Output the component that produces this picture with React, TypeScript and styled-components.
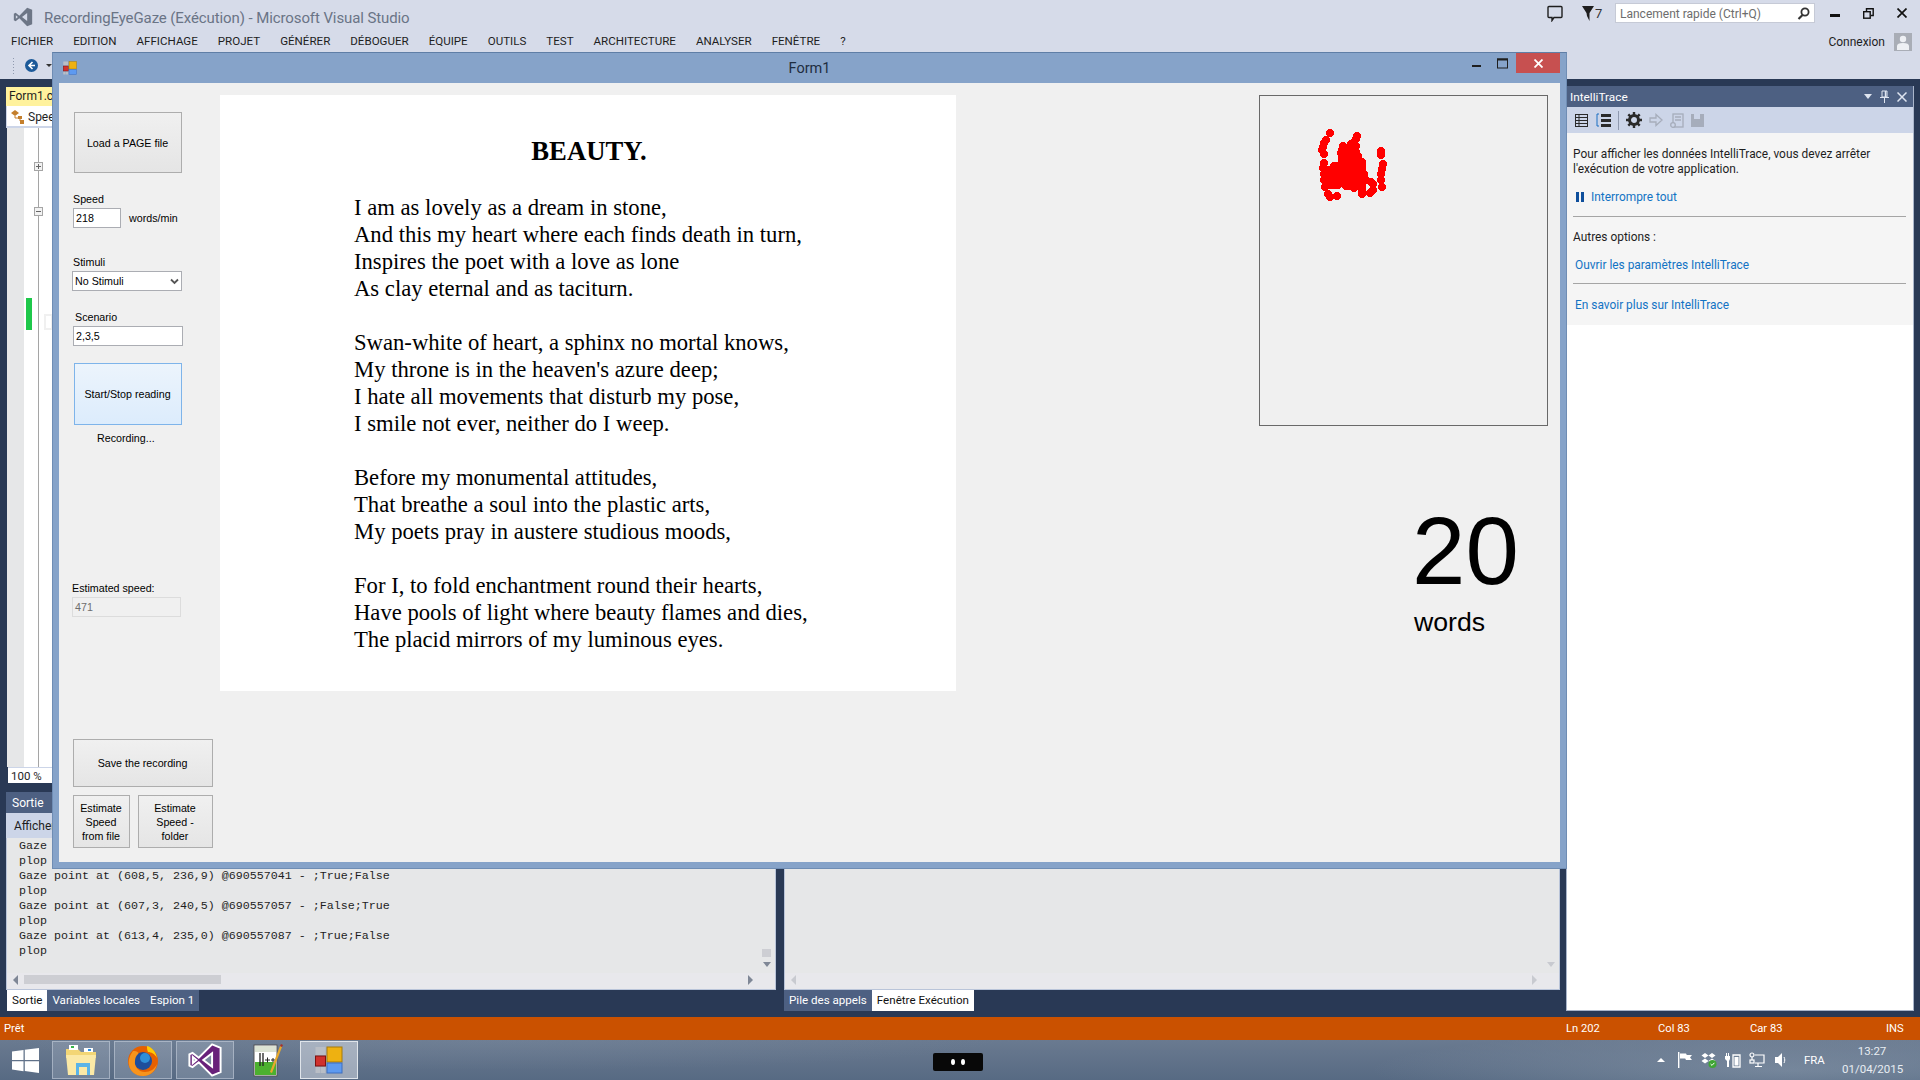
import React from "react";
import styled, { createGlobalStyle } from "styled-components";

const Global = createGlobalStyle`
  html, body { margin: 0; padding: 0; background: #293955; }
  * { box-sizing: border-box; }
`;

const ui = `"Roboto", "Liberation Sans", sans-serif`;
const win = `"Liberation Sans", Arial, sans-serif`;

const Desk = styled.div`
  position: relative; width: 1920px; height: 1080px; overflow: hidden;
  display: flex; flex-direction: column; font-family: ${ui};
`;
const VsWindow = styled.div`flex: 1; display: flex; flex-direction: column; min-height: 0;`;
const Chrome = styled.header`height: 79px; background: #d6dbe9; display: flex; flex-direction: column; flex: none;`;
const TitleRow = styled.div`height: 30px; display: flex; align-items: flex-start; padding-left: 13px;`;
const VsGlyph = styled.svg`width: 20px; height: 20px; margin-top: 7px; color: #6d7686;`;
const AppTitle = styled.div`margin: 8px 0 0 11px; font-size: 15px; line-height: 20px; color: #6a7486; letter-spacing: -0.1px;`;
const TitleRight = styled.div`margin-left: auto; display: flex; align-items: center; height: 26px; padding-right: 13px;`;
const Chat = styled.svg`width: 16px; height: 17px; color: #1e1e1e;`;
const FilterBox = styled.div`margin-left: 19px; display: flex; align-items: center; gap: 1px; font-size: 13px; color: #333; width: 33px;`;
const Quick = styled.div`
  width: 200px; height: 20px; background: #fff; border: 1px solid #c6cad6; display: flex; align-items: center;
  justify-content: space-between; padding: 1px 4px 0; font-size: 12px; color: #6d6d6d;
`;
const WinCtrl = styled.div`margin-left: 15px; display: flex; gap: 23px; align-items: center;`;
const MenuRow = styled.nav`height: 22px; display: flex; align-items: center; padding: 0 8px 0 11px; gap: 20px; font-size: 11.57px; color: #1e1e1e;`;
const Connect = styled.div`margin-left: auto; display: flex; align-items: center; gap: 9px; font-size: 12px; color: #1e1e1e; margin-top: 1px;`;
const Avatar = styled.svg`width: 18px; height: 18px;`;
const ToolRow = styled.div`height: 27px; display: flex; align-items: center; padding-left: 12px; gap: 10px;`;
const Gripper = styled.div`width: 3px; height: 17px; background-image: radial-gradient(#8f99ae 0.8px, transparent 0.9px); background-size: 3px 3px;`;
const DropCaret = styled.div`width: 0; height: 0; margin-left: -2px; border-left: 3px solid transparent; border-right: 3px solid transparent; border-top: 3px solid #333;`;

const Workspace = styled.main`flex: 1; min-height: 0; background: #293955; display: flex; padding: 7px 6px 6px 6px; gap: 6px;`;
const LeftArea = styled.div`flex: 1; min-width: 0; display: flex; flex-direction: column;`;
const Editor = styled.section`margin-top: 1px; height: 696px; display: flex; flex-direction: column; flex: none;`;
const DocTab = styled.div`width: 60px; height: 19px; background: #fff29d; font-size: 12px; line-height: 19px; padding-left: 3px; color: #1e1e1e; flex: none;`;
const NavBar = styled.div`height: 22px; background: #fff; border-left: 1px solid #ccd5e8; border-bottom: 2px solid #ccd5e8; display: flex; align-items: center; gap: 3px; padding: 1px 0 0 4px; font-size: 12px; color: #1e1e1e; flex: none;`;
const EditorBody = styled.div`flex: 1; min-height: 0; display: flex; background: #fff; margin-left: 1px;`;
const Gutter = styled.div`width: 17px; background: #e6e7e8; flex: none;`;
const ChangeCol = styled.div`width: 6px; margin-left: 2px; padding-top: 170px; flex: none;`;
const GreenBar = styled.div`height: 32px; background: #1ec84a;`;
const OutlineCol = styled.div`
  width: 9px; margin-left: 2px; flex: none; padding-top: 34px; display: flex; flex-direction: column; gap: 36px;
  background: linear-gradient(#a5a5a5, #a5a5a5) center / 1px 100% no-repeat;
`;
const Fold = styled.div`
  width: 9px; height: 9px; border: 1px solid #a5a5a5; background: #f2f2f2; display: flex; align-items: center; justify-content: center;
  &::before { content: ""; width: 5px; height: 1px; background: #666; }
  ${(p: { $plus?: boolean }) => p.$plus && `background-image: linear-gradient(#666,#666); background-size: 1px 5px; background-position: center; background-repeat: no-repeat;`}
`;
const Marker = styled.div`width: 9px; height: 16px; margin: 186px 0 0 1px; border: 2px solid #f0f0f0; flex: none;`;
const Zoom = styled.div`height: 16px; background: #fff; font-size: 11.5px; line-height: 16px; padding-left: 3px; margin-left: 2px; color: #1e1e1e; border-top: 1px solid #ccd5e8; flex: none;`;

const Bottom = styled.div`margin-top: 9px; flex: 1; min-height: 0; display: flex; gap: 8px;`;
const ToolPanel = styled.section`flex: ${(p: { $w?: number }) => (p.$w ? `0 0 ${p.$w}px` : "1")}; min-width: 0; display: flex; flex-direction: column;`;
const PanelHead = styled.div`height: 21px; background: #4d6082; color: #fff; font-size: 12px; line-height: 23px; padding-left: 6px; flex: none;`;
const PanelTools = styled.div`height: 25px; background: #ccd5e8; font-size: 12px; line-height: 25px; padding: 1px 0 0 8px; color: #1e1e1e; flex: none;`;
const Output = styled.div`flex: 1; min-height: 0; background: #e6e7e8; border-right: 1px solid #b9c4d9; border-bottom: 1px solid #b9c4d9; border-left: 1px solid #b9c4d9; display: flex; flex-direction: column;`;
const OutputMain = styled.div`flex: 1; min-height: 0; display: flex;`;
const Lines = styled.pre`flex: 1; margin: 0; padding: 1px 0 0 12px; font-family: "Liberation Mono", monospace; font-size: 11.67px; line-height: 15px; color: #1e1e1e;`;
const VScroll = styled.div`width: 13px; margin-right: 2px; display: flex; flex-direction: column; align-items: center; justify-content: flex-end; padding-bottom: 6px; gap: 5px;`;
const VThumb = styled.div`width: 9px; height: 8px; background: ${(p: { $off?: boolean }) => (p.$off ? "transparent" : "#cdced3")};`;
const ArrowDown = styled.div`width: 0; height: 0; border-left: 4px solid transparent; border-right: 4px solid transparent; border-top: 5px solid ${(p: { $off?: boolean }) => (p.$off ? "#c8cad0" : "#7f8796")};`;
const HScroll = styled.div`height: 16px; background: #e8e8ec; display: flex; align-items: center; padding: 0 22px 3px 6px; flex: none;`;
const ArrowSide = styled.div<{ $right?: boolean; $off?: boolean }>`
  width: 0; height: 0; border-top: 5px solid transparent; border-bottom: 5px solid transparent;
  ${(p) => (p.$right ? `margin-left: auto; border-left: 5px solid ${p.$off ? "#c8cad0" : "#7f8796"};` : `border-right: 5px solid ${p.$off ? "#c8cad0" : "#7f8796"};`)}
`;
const HThumb = styled.div`width: 197px; height: 9px; background: #cdced3; margin-left: 6px;`;
const Tabs = styled.div<{ $inset?: number }>`height: 21px; display: flex; flex: none; padding-left: ${(p) => p.$inset ?? 0}px;`;
const Tab = styled.div<{ $on?: boolean }>`
  height: 21px; padding: 0 5px; font-size: 11.6px; line-height: 20px; color: ${(p) => (p.$on ? "#111" : "#fff")};
  background: ${(p) => (p.$on ? "#fff" : "#4d6082")};
`;

const Intelli = styled.aside`width: 348px; flex: none; background: #fff; border: 1px solid #a9b5ca; border-top: 0; display: flex; flex-direction: column;`;
const IntelliHead = styled.div`height: 21px; background: #4d6082; color: #fff; font-size: 11.8px; display: flex; align-items: center; padding: 0 6px 0 3px; gap: 8px; flex: none;`;
const HeadTitle = styled.span`margin-right: auto;`;
const IntelliTools = styled.div`height: 26px; background: #ccd5e8; display: flex; align-items: center; padding-left: 7px; gap: 7px; flex: none;`;
const ToolSep = styled.div`width: 1px; height: 19px; background: #8f99ae;`;
const IntelliBody = styled.div`height: 192px; background: #f5f5f5; padding: 14px 7px 0 6px; font-size: 11.9px; color: #1e1e1e; flex: none;`;
const Para = styled.p`margin: 0; line-height: 15px;`;
const LinkLine = styled.div<{ $top: number; $left?: number }>`display: flex; align-items: center; gap: 7px; margin: ${(p) => p.$top}px 0 0 ${(p) => p.$left ?? 2}px; height: 15px; color: #1273c4;`;
const Rule = styled.hr<{ $top: number }>`margin: ${(p) => p.$top}px 0 0 0; border: 0; height: 1px; background: #a5a5a5;`;
const Sub = styled.div`margin-top: 13px; line-height: 15px;`;

const Status = styled.footer`height: 23px; background: #ca5100; color: #fff; font-size: 11.2px; display: flex; align-items: center; padding-left: 4px; flex: none;`;
const StatusCells = styled.div`margin-left: auto; display: flex;`;
const Cell = styled.span<{ $w: number }>`width: ${(p) => p.$w}px;`;

const Taskbar = styled.div`
  height: 40px; flex: none; display: flex; align-items: center; padding-right: 18px;
  background:
    radial-gradient(420px 40px at 1790px 30px, rgba(165,180,195,0.35), transparent),
    radial-gradient(500px 30px at 500px 0px, rgba(125,140,160,0.3), transparent),
    linear-gradient(180deg, #6a7a90 0%, #576a83 100%);
`;
const Start = styled.div`width: 52px; display: flex; justify-content: center; padding-right: 1px;`;
const TaskBtn = styled.div<{ $state?: "on" | "plain" | "active" }>`
  width: 58px; height: 38px; margin-right: 4px; flex: none; display: flex; align-items: center; justify-content: center;
  border: 1px solid ${(p) => (p.$state === "active" ? "#dfe4ea" : p.$state === "plain" ? "transparent" : "rgba(200,210,222,0.55)")};
  background: ${(p) => (p.$state === "active" ? "rgba(225,230,238,0.5)" : p.$state === "plain" ? "transparent" : "rgba(205,215,228,0.22)")};
`;
const Pill = styled.div`width: 50px; height: 18px; margin: 4px 0 0 571px; background: #080808; border-radius: 2px; display: flex; align-items: center; justify-content: center; gap: 6px; flex: none;`;
const Dot = styled.div`width: 4px; height: 6px; border-radius: 50%; background: #fff;`;
const Tray = styled.div`margin-left: auto; display: flex; align-items: center; gap: 8px; color: #fff;`;
const TrayIcon = styled.svg`width: 16px; height: 16px;`;
const Lang = styled.div`margin-left: 7px; color: #fff; font-size: 11.4px; width: 21px;`;
const Clock = styled.div`margin-left: 9px; width: 60px; text-align: center; font-size: 11.5px; line-height: 18px; color: #e8edf2;`;

const FormWindow = styled.div`
  position: absolute; left: 52px; top: 52px; width: 1515px; height: 817px; background: #86a3c9;
  border: 1px solid #6f8db4; border-top-color: #5f7ea6; display: flex; flex-direction: column;
`;
const FormTitle = styled.div`height: 30px; display: flex; align-items: center; padding-left: 10px; flex: none;`;
const FormName = styled.div`flex: 1; text-align: center; font-size: 14.5px; color: #1f2d40; padding-left: 79px;`;
const FormBtns = styled.div`display: flex; align-items: flex-start; height: 100%; padding-right: 6px;`;
const FormBtn = styled.div<{ $w: number }>`width: ${(p) => p.$w}px; height: 20px; display: flex; align-items: center; justify-content: center;`;
const FormClose = styled.div`width: 44px; height: 20px; background: #c75050; display: flex; align-items: center; justify-content: center;`;
const FormBody = styled.div`flex: 1; min-height: 0; margin: 0 6px 6px; background: #f0f0f0; display: flex; font-family: ${win}; font-size: 10.7px; color: #000;`;
const Controls = styled.div`width: 161px; flex: none; padding-left: 13px; display: flex; flex-direction: column; align-items: flex-start;`;

type Off = { $mt: number; $ml?: number };
const WinBtn = styled.div<Off & { $w: number; $h: number; $hot?: boolean }>`
  margin: ${(p) => p.$mt}px 0 0 ${(p) => p.$ml ?? 0}px; width: ${(p) => p.$w}px; height: ${(p) => p.$h}px; flex: none;
  border: 1px solid ${(p) => (p.$hot ? "#7eb4ea" : "#adadad")};
  background: ${(p) => (p.$hot ? "linear-gradient(#ecf4fc,#dcecfc)" : "linear-gradient(#f0f0f0,#e5e5e5)")};
  display: flex; align-items: center; justify-content: center; text-align: center; line-height: 14px; padding-right: 1px;
`;
const Lbl = styled.div<Off>`margin: ${(p) => p.$mt}px 0 0 ${(p) => p.$ml ?? 0}px; height: 14px; line-height: 14px;`;
const Field = styled.div<Off & { $w: number; $off?: boolean }>`
  margin: ${(p) => p.$mt}px 0 0 ${(p) => p.$ml ?? 0}px; width: ${(p) => p.$w}px; height: 20px; flex: none;
  background: ${(p) => (p.$off ? "#f0f0f0" : "#fff")}; border: 1px solid ${(p) => (p.$off ? "#dcdcdc" : "#abadb3")};
  color: ${(p) => (p.$off ? "#6d6d6d" : "#000")}; line-height: 18px; padding: 0 2px; display: flex; justify-content: space-between; align-items: center;
`;
const Row = styled.div<Off>`margin: ${(p) => p.$mt}px 0 0 ${(p) => p.$ml ?? 0}px; display: flex; align-items: center; gap: 8px;`;
const PoemPanel = styled.div`width: 736px; height: 596px; margin-top: 12px; background: #fff; flex: none; padding-top: 41px; font-family: "Liberation Serif", "Times New Roman", serif; color: #000;`;
const PoemTitle = styled.h1`margin: 0 0 28px; padding-left: 2px; text-align: center; font-size: 26.67px; line-height: 30px; font-weight: 700;`;
const Stanza = styled.div`margin: 0 0 27px 134px; font-size: 22.67px; line-height: 27px; white-space: pre;`;
const Side = styled.div`flex: 1; padding-left: 303px; padding-top: 12px; display: flex; flex-direction: column; align-items: flex-start;`;
const GazeBox = styled.div`width: 289px; height: 331px; border: 1px solid #696969; flex: none;`;
const GazePlot = styled.svg`display: block; width: 100%; height: 100%;`;
const Counter = styled.div`margin: 77px 0 0 153px; font-size: 96px; line-height: 96px;`;
const Unit = styled.div`margin: 8px 0 0 155px; font-size: 26.67px; line-height: 30px;`;

const stanzas = [
  "I am as lovely as a dream in stone,\nAnd this my heart where each finds death in turn,\nInspires the poet with a love as lone\nAs clay eternal and as taciturn.",
  "Swan-white of heart, a sphinx no mortal knows,\nMy throne is in the heaven's azure deep;\nI hate all movements that disturb my pose,\nI smile not ever, neither do I weep.",
  "Before my monumental attitudes,\nThat breathe a soul into the plastic arts,\nMy poets pray in austere studious moods,",
  "For I, to fold enchantment round their hearts,\nHave pools of light where beauty flames and dies,\nThe placid mirrors of my luminous eyes.",
];

const menus = ["FICHIER","EDITION","AFFICHAGE","PROJET","GÉNÉRER","DÉBOGUER","ÉQUIPE","OUTILS","TEST","ARCHITECTURE","ANALYSER","FENÊTRE","?"];

const logLines = ["Gaze","plop","Gaze point at (608,5, 236,9) @690557041 - ;True;False","plop","Gaze point at (607,3, 240,5) @690557057 - ;False;True","plop","Gaze point at (613,4, 235,0) @690557087 - ;True;False","plop"].join("\n");

// blob points in crop coordinates of the reference (x-1250, y-90)
const blob: [number, number][] = [
  [80,43],[76,50],[74,53],[73,57],[72,60],[74,64],[107,46],[106,49],[104,52],[101,54],[99,57],[93,56],[92,60],[91,63],[131,61],[131,65],
  [133,74],[132,79],[131,84],[131,90],[132,97],[123,94],[123,100],[120,103],[121,92],[112,104],[112,100],
  [104,98],[80,107],[87,106],[78,104],[75,97],[74,90],[74,84],[73,78],[74,73],
  [84,76],[88,76],[100,66],[104,68],[108,72],[111,78],[114,84],[116,90],[95,73],[92,77],[100,73],
  [92,68],[95,62],[99,62],[103,60],[106,56],[96,68],[92,72],[106,62],[108,66],
];
for (let x = 76; x <= 114; x += 4) for (let y = 80; y <= 92; y += 4) blob.push([x, y]);
for (let x = 96; x <= 112; x += 4) for (let y = 72; y <= 96; y += 4) blob.push([x, y]);
for (let x = 76; x <= 88; x += 4) blob.push([x, 95]);

const VsLogo = ({ c = "currentColor" }: { c?: string }) => (
  <path fill={c} fillRule="evenodd" d="M17 1 7.6 10.4 3.2 7 1 8v8l2.2 1 4.4-3.4L17 23l6-2.4V3.4ZM17 7.2v9.6L10.8 12ZM3.4 9.8 6 12l-2.6 2.2Z" />
);
const FormIcon = ({ s }: { s: number }) => (
  <svg width={s} height={s} viewBox="0 0 28 28">
    <rect x="0.5" y="1" width="10" height="8" fill="#b9bec6" />
    <rect x="0.5" y="21" width="4.5" height="6" fill="#b9bec6" />
    <rect x="5.5" y="21" width="5" height="6" fill="#b9bec6" />
    <rect x="0.5" y="10" width="10" height="10" fill="#d0312d" stroke="#7c1210" />
    <rect x="12" y="1" width="15" height="15" fill="#eeb111" stroke="#a67a0b" />
    <rect x="12" y="17" width="15" height="10" fill="#5e9af0" stroke="#3d6ec0" />
  </svg>
);

export default function App() {
  return (
    <Desk>
      <Global />
      <VsWindow>
        <Chrome>
          <TitleRow>
            <VsGlyph viewBox="0 0 24 24"><VsLogo /></VsGlyph>
            <AppTitle>RecordingEyeGaze (Exécution) - Microsoft Visual Studio</AppTitle>
            <TitleRight>
              <Chat viewBox="0 0 16 17" fill="none" stroke="currentColor" strokeWidth="1.4"><path d="M2 1.5h12a1 1 0 0 1 1 1v9a1 1 0 0 1-1 1H7l-2 3v-3H2a1 1 0 0 1-1-1v-9a1 1 0 0 1 1-1Z" /></Chat>
              <FilterBox>
                <svg width="12" height="15" viewBox="0 0 12 15"><path fill="#1e1e1e" d="M0 0h12L7.5 7v8L5 10 4.5 7Z" /></svg>
                <span>7</span>
              </FilterBox>
              <Quick>
                <span>Lancement rapide (Ctrl+Q)</span>
                <svg width="13" height="13" viewBox="0 0 13 13" fill="none" stroke="#333" strokeWidth="1.8"><circle cx="8" cy="5" r="3.6" /><path d="M5.5 8 1.5 12" strokeWidth="2.2" /></svg>
              </Quick>
              <WinCtrl>
                <svg width="10" height="10" viewBox="0 0 10 10"><rect y="6" width="10" height="3" fill="#111" /></svg>
                <svg width="11" height="11" viewBox="0 0 11 11" fill="none" stroke="#111" strokeWidth="1.4"><rect x="0.7" y="3.7" width="6.5" height="6.5" /><path d="M3.5 3V.8h6.7v6.7H8" /></svg>
                <svg width="10" height="10" viewBox="0 0 10 10" stroke="#111" strokeWidth="1.7"><path d="M.5.5l9 9M9.5.5l-9 9" /></svg>
              </WinCtrl>
            </TitleRight>
          </TitleRow>
          <MenuRow>
            {menus.map((m) => <span key={m}>{m}</span>)}
            <Connect>
              <span>Connexion</span>
              <Avatar viewBox="0 0 18 18"><rect width="18" height="18" fill="#a9adb6" /><circle cx="9" cy="6" r="3.2" fill="#eef0f4" /><path fill="#eef0f4" d="M3 17v-4c0-2 2-3 6-3s6 1 6 3v4Z" /></Avatar>
            </Connect>
          </MenuRow>
          <ToolRow>
            <Gripper />
            <svg width="13" height="13" viewBox="0 0 13 13"><circle cx="6.5" cy="6.5" r="6.5" fill="#1c5a99" /><path d="M7.5 3 4 6.5 7.5 10M4.5 6.5H10" stroke="#fff" strokeWidth="1.6" fill="none" /></svg>
            <DropCaret />
          </ToolRow>
        </Chrome>
        <Workspace>
          <LeftArea>
            <Editor>
              <DocTab>Form1.cs</DocTab>
              <NavBar>
                <svg width="14" height="14" viewBox="0 0 14 14" fill="#c47f2c"><path d="M4 0 8 3 4 6 0 3ZM7 6h4v3H7ZM9 10h4v4H9Z" /><path d="M4 6v2h3M9 9v2" stroke="#c47f2c" fill="none" /></svg>
                <span>SpeedForm</span>
              </NavBar>
              <EditorBody>
                <Gutter />
                <ChangeCol><GreenBar /></ChangeCol>
                <OutlineCol><Fold $plus /><Fold /></OutlineCol>
                <Marker />
              </EditorBody>
              <Zoom>100 %</Zoom>
            </Editor>
            <Bottom>
              <ToolPanel $w={770}>
                <PanelHead>Sortie</PanelHead>
                <PanelTools>Afficher la sortie à partir de :</PanelTools>
                <Output>
                  <OutputMain>
                    <Lines>{logLines}</Lines>
                    <VScroll><VThumb /><ArrowDown /></VScroll>
                  </OutputMain>
                  <HScroll><ArrowSide /><HThumb /><ArrowSide $right /></HScroll>
                </Output>
                <Tabs $inset={1}>
                  <Tab $on>Sortie</Tab>
                  <Tab>Variables locales</Tab>
                  <Tab>Espion 1</Tab>
                </Tabs>
              </ToolPanel>
              <ToolPanel>
                <PanelHead>Fenêtre Exécution</PanelHead>
                <Output>
                  <OutputMain>
                    <Lines />
                    <VScroll><VThumb $off /><ArrowDown $off /></VScroll>
                  </OutputMain>
                  <HScroll><ArrowSide $off /><ArrowSide $right $off /></HScroll>
                </Output>
                <Tabs>
                  <Tab>Pile des appels</Tab>
                  <Tab $on>Fenêtre Exécution</Tab>
                </Tabs>
              </ToolPanel>
            </Bottom>
          </LeftArea>
          <Intelli>
            <IntelliHead>
              <HeadTitle>IntelliTrace</HeadTitle>
              <svg width="8" height="5" viewBox="0 0 8 5"><path d="M0 0h8L4 5Z" fill="#dfe5f0" /></svg>
              <svg width="9" height="13" viewBox="0 0 9 13" fill="none" stroke="#dfe5f0"><path d="M2 1h5v6H2ZM0 7.5h9M4.5 8v5" /><path d="M5.5 1v6" strokeWidth="1.5" /></svg>
              <svg width="10" height="10" viewBox="0 0 10 10" stroke="#dfe5f0" strokeWidth="1.5"><path d="M.5.5l9 9M9.5.5l-9 9" /></svg>
            </IntelliHead>
            <IntelliTools>
              <svg width="15" height="15" viewBox="0 0 15 15" fill="none" stroke="#2a2a2a"><rect x="1.5" y="1.5" width="12" height="12" /><path d="M1.5 4.5h12M1.5 7.5h12M1.5 10.5h12M5 1.5v12" /></svg>
              <svg width="15" height="15" viewBox="0 0 15 15"><path fill="#2a2a2a" d="M5 1h10v3H5ZM5 6h10v3H5ZM5 11h10v3H5Z" /><path fill="none" stroke="#1b6ec2" d="M3 1H1v12h2" /></svg>
              <ToolSep />
              <svg width="16" height="16" viewBox="0 0 16 16"><circle cx="8" cy="8" r="4.5" fill="none" stroke="#2a2a2a" strokeWidth="3" /><path stroke="#2a2a2a" strokeWidth="2.4" d="M8 0v3M8 13v3M0 8h3M13 8h3M2.3 2.3l2 2M11.7 11.7l2 2M2.3 13.7l2-2M11.7 4.3l2-2" /></svg>
              <svg width="14" height="14" viewBox="0 0 14 14" fill="none" stroke="#a6adbb" strokeWidth="1.3"><path d="M1 5h6V1.5L13 7l-6 5.5V9H1Z" /></svg>
              <svg width="14" height="15" viewBox="0 0 14 15" fill="none" stroke="#a6adbb" strokeWidth="1.3"><rect x="3" y="1" width="10" height="13" /><path d="M5 4h6M5 7h6" /><circle cx="3" cy="12" r="2.3" fill="#ccd5e8" /></svg>
              <svg width="13" height="13" viewBox="0 0 13 13"><path fill="#a6adbb" d="M0 0h13v13H0Z" /><path fill="#ccd5e8" d="M3 0h6v5H3Z" /></svg>
            </IntelliTools>
            <IntelliBody>
              <Para>Pour afficher les données IntelliTrace, vous devez arrêter<br />l'exécution de votre application.</Para>
              <LinkLine $top={12} $left={3}>
                <svg width="8" height="10" viewBox="0 0 8 10" fill="#0f4f9c"><rect width="3" height="10" /><rect x="5" width="3" height="10" /></svg>
                <span>Interrompre tout</span>
              </LinkLine>
              <Rule $top={12} />
              <Sub>Autres options :</Sub>
              <LinkLine $top={12}><span>Ouvrir les paramètres IntelliTrace</span></LinkLine>
              <Rule $top={11} />
              <LinkLine $top={13}><span>En savoir plus sur IntelliTrace</span></LinkLine>
            </IntelliBody>
          </Intelli>
        </Workspace>
        <Status>
          <span>Prêt</span>
          <StatusCells>
            <Cell $w={92}>Ln 202</Cell>
            <Cell $w={92}>Col 83</Cell>
            <Cell $w={136}>Car 83</Cell>
            <Cell $w={34}>INS</Cell>
          </StatusCells>
        </Status>
      </VsWindow>
      <Taskbar>
        <Start>
          <svg width="27" height="25" viewBox="0 0 27 25" fill="#fff"><path d="M0 3.5 11.5 2v10H0ZM12.8 1.8 27 0v12H12.8ZM0 13.2h11.5v10L0 21.6ZM12.8 13.2H27V25l-14.2-2Z" /></svg>
        </Start>
        <TaskBtn>
          <svg width="34" height="34" viewBox="0 0 34 34">
            <path d="M2 6h12l3 3h15v6H2Z" fill="#f3d675" /><path d="M2 12h30l-2 20H4Z" fill="#fbe9a6" />
            <rect x="5" y="2" width="9" height="5" fill="#fff" /><rect x="7" y="3" width="3" height="2" fill="#39b54a" /><rect x="20" y="5" width="9" height="4" fill="#fff" /><rect x="24" y="6" width="3" height="2" fill="#2f8fe0" />
            <path d="M12 32V20h14v12h-3v-8h-8v8Z" fill="#5ab4e8" />
          </svg>
        </TaskBtn>
        <TaskBtn>
          <svg width="32" height="34" viewBox="0 0 32 34">
            <circle cx="16" cy="18" r="15" fill="#e66000" /><circle cx="16" cy="18" r="9" fill="#1f4e9c" /><circle cx="18" cy="15" r="5" fill="#2f8fd8" />
            <path d="M6 8c-3 4-5 9-4 14 1 6 6 11 14 11 8 0 13-6 14-12-2 5-7 8-12 8-6 0-11-5-10-11 0-3 1-5 3-7 1-1 0-3-5-3Z" fill="#f7941d" />
            <path d="M20 3c5 1 9 6 10 12-2-4-6-6-9-6-1-2-1-4-1-6Z" fill="#ffcb05" />
          </svg>
        </TaskBtn>
        <TaskBtn>
          <svg width="34" height="34" viewBox="0 0 24 24"><path stroke="#fff" strokeWidth="1.4" fill="#68217a" fillRule="evenodd" d="M17 1 7.6 10.4 3.2 7 1 8v8l2.2 1 4.4-3.4L17 23l6-2.4V3.4ZM17 7.2v9.6L10.8 12ZM3.4 9.8 6 12l-2.6 2.2Z" /></svg>
        </TaskBtn>
        <TaskBtn $state="plain">
          <svg width="32" height="36" viewBox="0 0 32 36">
            <rect x="3" y="3" width="23" height="31" fill="#fff" stroke="#555" /><rect x="4" y="20" width="21" height="13" fill="#4cb02f" />
            <path d="M4 5h21M4 7h21M4 9h21" stroke="#b9c6a8" />
            <path d="M9 11v13M12 11v13" stroke="#222" strokeWidth="1.3" fill="none" />
            <path d="M14 18h5M16.5 15.5v5M20 18h4M22 16v4" stroke="#222" />
            <path d="M19 30 29 4l2 1-10 26Z" fill="#e8a92b" /><path d="M29 4l1-2 2 1-1 2Z" fill="#a8322a" />
          </svg>
        </TaskBtn>
        <TaskBtn $state="active"><FormIcon s={28} /></TaskBtn>
        <Pill><Dot /><Dot /></Pill>
        <Tray>
          <TrayIcon viewBox="0 0 16 16"><path d="M4 10l4-4 4 4Z" fill="#fff" /></TrayIcon>
          <TrayIcon viewBox="0 0 16 16"><path fill="#fff" d="M1 0h1.4v16H1ZM3 1.5h6l.8 1.5H15l-2 2.5 2 2.5H9l-.8-1.5H3Z" /></TrayIcon>
          <TrayIcon viewBox="0 0 16 16"><path fill="#fff" d="M4 1 7.5 3.5 4 6 .5 3.5ZM11 1l3.5 2.5L11 6 7.5 3.5ZM4 6.5 7.5 9 4 11.5.5 9ZM11 6.5 14.5 9 11 11.5 7.5 9Z" /><circle cx="11.5" cy="12" r="4" fill="#3fa535" /><path d="M9.6 12l1.4 1.4 2.4-2.6" stroke="#fff" fill="none" /></TrayIcon>
          <TrayIcon viewBox="0 0 16 16"><path fill="#fff" d="M1 1h1v3h1V1h1v3h1v3L4 9v6H2V9L0 7V4h1Z" /><path fill="none" stroke="#fff" strokeWidth="1.3" d="M8 3h7v12H8Z" /><rect x="9.5" y="5" width="4" height="8.5" fill="#fff" /></TrayIcon>
          <TrayIcon viewBox="0 0 16 16" fill="none" stroke="#fff" strokeWidth="1.2"><circle cx="3" cy="3" r="2" /><path d="M3 5v3M6 3h9v8H6M9 11v3M6 14.5h7" /><rect x="1" y="8" width="4" height="3" /></TrayIcon>
          <TrayIcon viewBox="0 0 16 16"><path fill="#fff" d="M2 5h3l4-4v14l-4-4H2Z" /><path stroke="#fff" fill="none" d="M11 5c1 2 1 4 0 6" /></TrayIcon>
          <Lang>FRA</Lang>
          <Clock>13:27<br />01/04/2015</Clock>
        </Tray>
      </Taskbar>
      <FormWindow>
        <FormTitle>
          <FormIcon s={14} />
          <FormName>Form1</FormName>
          <FormBtns>
            <FormBtn $w={26}><svg width="9" height="9" viewBox="0 0 9 9"><rect y="6" width="9" height="2" fill="#1f1f1f" /></svg></FormBtn>
            <FormBtn $w={27}><svg width="11" height="11" viewBox="0 0 11 11" fill="none" stroke="#1f1f1f"><rect x=".5" y="1" width="10" height="9" /><path d="M0 1.5h11" strokeWidth="2" /></svg></FormBtn>
            <FormClose><svg width="9" height="9" viewBox="0 0 9 9" stroke="#fff" strokeWidth="1.8"><path d="M.5.5l8 8M8.5.5l-8 8" /></svg></FormClose>
          </FormBtns>
        </FormTitle>
        <FormBody>
          <Controls>
            <WinBtn $mt={29} $ml={2} $w={108} $h={61}>Load a PAGE file</WinBtn>
            <Lbl $mt={19} $ml={1}>Speed</Lbl>
            <Row $mt={2} $ml={1}>
              <Field $mt={0} $w={48}>218</Field>
              <span>words/min</span>
            </Row>
            <Lbl $mt={27} $ml={1}>Stimuli</Lbl>
            <Field $mt={2} $w={110}>
              <span>No Stimuli</span>
              <svg width="9" height="7" viewBox="0 0 9 7" fill="none" stroke="#555" strokeWidth="1.8"><path d="M1 1.5 4.5 5 8 1.5" /></svg>
            </Field>
            <Lbl $mt={19} $ml={3}>Scenario</Lbl>
            <Field $mt={2} $ml={1} $w={110}>2,3,5</Field>
            <WinBtn $mt={17} $ml={2} $w={108} $h={62} $hot>Start/Stop reading</WinBtn>
            <Lbl $mt={6} $ml={25}>Recording...</Lbl>
            <Lbl $mt={136}>Estimated speed:</Lbl>
            <Field $mt={2} $w={109} $off>471</Field>
            <WinBtn $mt={122} $ml={1} $w={140} $h={48}>Save the recording</WinBtn>
            <Row $mt={8} $ml={1}>
              <WinBtn $mt={0} $w={57} $h={53}>Estimate<br />Speed<br />from file</WinBtn>
              <WinBtn $mt={0} $w={75} $h={53}>Estimate<br />Speed -<br />folder</WinBtn>
            </Row>
          </Controls>
          <PoemPanel>
            <PoemTitle>BEAUTY.</PoemTitle>
            {stanzas.map((s) => <Stanza key={s}>{s}</Stanza>)}
          </PoemPanel>
          <Side>
            <GazeBox>
              <GazePlot viewBox="10 6 287 329" shapeRendering="crispEdges">
                {blob.map(([x, y], i) => <circle key={i} cx={x} cy={y} r={3.8} fill="#ff0000" />)}
              </GazePlot>
            </GazeBox>
            <Counter>20</Counter>
            <Unit>words</Unit>
          </Side>
        </FormBody>
      </FormWindow>
    </Desk>
  );
}
